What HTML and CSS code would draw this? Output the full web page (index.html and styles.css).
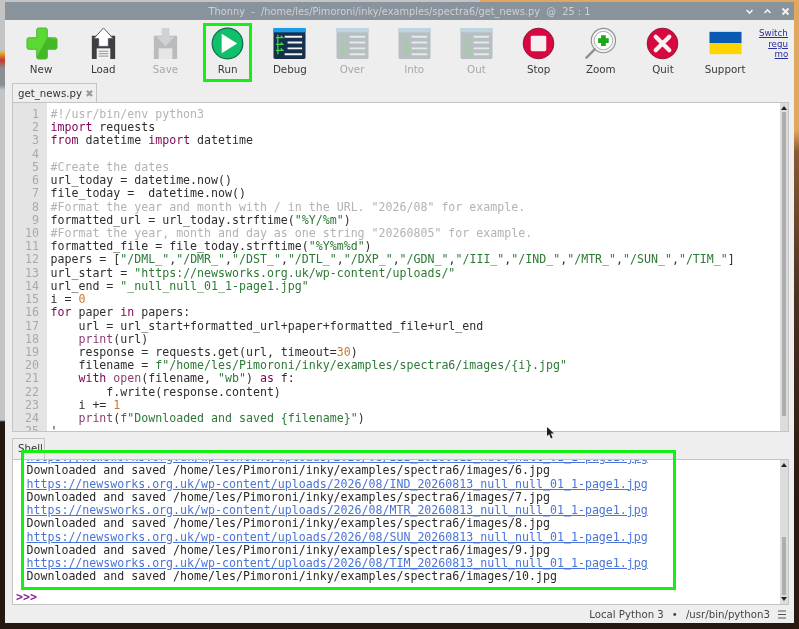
FILE: index.html
```html
<!DOCTYPE html>
<html lang="en">
<head>
    <meta charset="UTF-8">
    <title>Thonny - get_news.py</title>
    <link rel="stylesheet" href="styles.css">
</head>
<body>
<div class="window">
    <div class="titlebar">
        <span class="title">Thonny  -  /home/les/Pimoroni/inky/examples/spectra6/get_news.py  @  25 : 1</span>
        <div class="win-buttons">
            <svg width="9" height="9" viewBox="0 0 9 9"><path d="M1.5 3 L4.5 6 L7.5 3" fill="none" stroke="#f2f3f4" stroke-width="1.6"/></svg>
            <svg width="9" height="9" viewBox="0 0 9 9"><path d="M1.5 6 L4.5 3 L7.5 6" fill="none" stroke="#f2f3f4" stroke-width="1.6"/></svg>
            <svg width="9" height="9" viewBox="0 0 9 9"><path d="M1.5 1.5 L7.5 7.5 M7.5 1.5 L1.5 7.5" fill="none" stroke="#f2f3f4" stroke-width="2"/></svg>
        </div>
    </div>

    <div class="toolbar">
        <div class="tool">
            <svg class="icon" viewBox="0 0 34 34">
                <path d="M12 3 Q12 1 14 1 H21 Q23 1 23 3 V11 H31 Q33 11 33 13 V21 Q33 23 31 23 H23 V31 Q23 33 21 33 H14 Q12 33 12 31 V23 H4 Q2 23 2 21 V13 Q2 11 4 11 H12 Z" fill="#5ad935" stroke="#3fa526" stroke-width=".8"/>
                <path d="M33 13 V21 Q33 23 31 23 H23 V31 Q23 33 21 33 H14 Q12 33 12 31 L23 11 Z" fill="#45b82a"/>
            </svg>
            <span>New</span>
        </div>
        <div class="tool">
            <svg class="icon" viewBox="0 0 34 34">
                <path d="M5 9 H29 V33 H5 Z" fill="#3d3f42"/>
                <rect x="10" y="22" width="14" height="11" fill="#f2f2f2"/>
                <path d="M12 25 H22 M12 27.5 H22 M12 30 H22" stroke="#8b8d90"/>
                <path d="M17 1 L27 12 H22 V20 H12 V12 H7 Z" fill="#fff" stroke="#55585c"/>
            </svg>
            <span>Load</span>
        </div>
        <div class="tool off">
            <svg class="icon" viewBox="0 0 34 34">
                <path d="M5 9 H29 V33 H5 Z" fill="#b9bcbf"/>
                <rect x="10" y="22" width="14" height="11" fill="#e6e6e6"/>
                <path d="M17 20 L26 10 H21 V1 H13 V10 H8 Z" fill="#cfd1d3"/>
            </svg>
            <span>Save</span>
        </div>
        <div class="tool">
            <svg class="icon" viewBox="0 0 34 34">
                <circle cx="17" cy="17" r="15.8" fill="#0fbf6a" stroke="#0b6b48" stroke-width="1.2"/>
                <path d="M11 7 L27 17 L11 27 Z" fill="#fff"/>
            </svg>
            <span>Run</span>
            <div class="run-mark"></div>
        </div>
        <div class="tool">
            <svg class="icon" viewBox="0 0 34 34">
                <rect x="0.5" y="1" width="33" height="32" rx="1.5" fill="#16304c"/>
                <rect x="0.5" y="1" width="33" height="4.5" fill="#1e9be6"/>
                <path d="M12 9 H30 V11 H12 Z M15 15 H30 V17 H15 Z M15 21 H30 V23 H15 Z M12 27 H30 V29 H12 Z" fill="#f2f4f6"/>
                <path d="M5 8 V28 M3 11 H10 L8 9 M3 18 H10 L8 16 M3 24 H10 L8 22" fill="none" stroke="#3fdc3f" stroke-width="1.3"/>
            </svg>
            <span>Debug</span>
        </div>
        <div class="tool off">
            <svg class="icon" viewBox="0 0 34 34">
                <rect x="0.5" y="1" width="33" height="32" rx="1.5" fill="#b7bfc2"/>
                <rect x="0.5" y="1" width="33" height="4.5" fill="#bcd5df"/>
                <path d="M14 9 H30 V11 H14 Z M14 15 H30 V17 H14 Z M14 21 H30 V23 H14 Z M14 27 H30 V29 H14 Z" fill="#e6e9ea"/>
                <path d="M7 8 V27 M3.5 23 L7 28 L10.5 23" fill="none" stroke="#a2cda2" stroke-width="1.6"/>
            </svg>
            <span>Over</span>
        </div>
        <div class="tool off">
            <svg class="icon" viewBox="0 0 34 34">
                <rect x="0.5" y="1" width="33" height="32" rx="1.5" fill="#b7bfc2"/>
                <rect x="0.5" y="1" width="33" height="4.5" fill="#bcd5df"/>
                <path d="M14 9 H30 V11 H14 Z M14 15 H30 V17 H14 Z M14 21 H30 V23 H14 Z M14 27 H30 V29 H14 Z" fill="#e6e9ea"/>
                <path d="M4 9 L9 16 V26 M5 22 L9 27 L13 22" fill="none" stroke="#a2cda2" stroke-width="1.6"/>
            </svg>
            <span>Into</span>
        </div>
        <div class="tool off">
            <svg class="icon" viewBox="0 0 34 34">
                <rect x="0.5" y="1" width="33" height="32" rx="1.5" fill="#b7bfc2"/>
                <rect x="0.5" y="1" width="33" height="4.5" fill="#bcd5df"/>
                <path d="M14 9 H30 V11 H14 Z M14 15 H30 V17 H14 Z M14 21 H30 V23 H14 Z M14 27 H30 V29 H14 Z" fill="#e6e9ea"/>
                <path d="M13 13 H7 V27 H12 M9 23 L13 27 L9 31" fill="none" stroke="#a2cda2" stroke-width="1.6"/>
            </svg>
            <span>Out</span>
        </div>
        <div class="tool">
            <svg class="icon" viewBox="0 0 34 34">
                <circle cx="17" cy="17" r="15.8" fill="#d7073f" stroke="#8f1437" stroke-width="1"/>
                <rect x="9" y="9" width="16" height="16" rx="1.5" fill="#f6eef0"/>
            </svg>
            <span>Stop</span>
        </div>
        <div class="tool">
            <svg class="icon" viewBox="0 0 34 34">
                <circle cx="20" cy="14" r="12.5" fill="#f4f4f4" stroke="#8e9092" stroke-width="1.2"/>
                <circle cx="20" cy="14" r="9.5" fill="#fff" stroke="#a5a7a9" stroke-width="1"/>
                <path d="M17.6 8.5 H22.4 V11.6 H25.5 V16.4 H22.4 V19.5 H17.6 V16.4 H14.5 V11.6 H17.6 Z" fill="#1aa81a"/>
                <path d="M11 23 L2.5 31.5" stroke="#8e9092" stroke-width="2.6" stroke-linecap="round"/>
            </svg>
            <span>Zoom</span>
        </div>
        <div class="tool">
            <svg class="icon" viewBox="0 0 34 34">
                <circle cx="17" cy="17" r="15.8" fill="#d7073f" stroke="#8f1437" stroke-width="1"/>
                <path d="M10 10 L24 24 M24 10 L10 24" stroke="#f8f2f3" stroke-width="4.4" stroke-linecap="round"/>
            </svg>
            <span>Quit</span>
        </div>
        <div class="tool">
            <svg class="icon" viewBox="0 0 34 34">
                <rect x="0.5" y="5" width="33" height="11.5" fill="#0a5ab4"/>
                <rect x="0.5" y="16.5" width="33" height="11.5" fill="#fdd300"/>
            </svg>
            <span>Support</span>
        </div>
        <div class="switch-clip">
            <a class="switch-link">Switch to<br>regular<br>mode</a>
        </div>
    </div>

    <div class="tabs">
        <div class="tab">get_news.py <span class="tab-close">✖</span></div>
    </div>
    <div class="editor">
        <pre class="gutter">1
2
3
4
5
6
7
8
9
10
11
12
13
14
15
16
17
18
19
20
21
22
23
24
25</pre>
        <pre class="code"><i>#!/usr/bin/env python3</i>
<b>import</b> requests
<b>from</b> datetime <b>import</b> datetime

<i>#Create the dates</i>
url_today = datetime.now()
file_today =  datetime.now()
<i>#Format the year and month with / in the URL. "2026/08" for example.</i>
formatted_url = url_today.strftime(<s>"%Y/%m"</s>)
<i>#Format the year, month and day as one string "20260805" for example.</i>
formatted_file = file_today.strftime(<s>"%Y%m%d"</s>)
papers = [<s>"/DML_"</s>,<s>"/DMR_"</s>,<s>"/DST_"</s>,<s>"/DTL_"</s>,<s>"/DXP_"</s>,<s>"/GDN_"</s>,<s>"/III_"</s>,<s>"/IND_"</s>,<s>"/MTR_"</s>,<s>"/SUN_"</s>,<s>"/TIM_"</s>]
url_start = <s>"https://newsworks.org.uk/wp-content/uploads/"</s>
url_end = <s>"_null_null_01_1-page1.jpg"</s>
i = <u>0</u>
<b>for</b> paper <b>in</b> papers:
    url = url_start+formatted_url+paper+formatted_file+url_end
    <em>print</em>(url)
    response = requests.get(url, timeout=<u>30</u>)
    filename = <s>f"/home/les/Pimoroni/inky/examples/spectra6/images/{i}.jpg"</s>
    <b>with</b> <em>open</em>(filename, <s>"wb"</s>) <b>as</b> f:
        f.write(response.content)
    i += <u>1</u>
    <em>print</em>(<s>f"Downloaded and saved {filename}"</s>)
'</pre>
        <div class="scrollbar">
            <span class="arrow-up"></span>
            <div class="track"><div class="thumb thumb-editor"></div></div>
            <span class="arrow-down"></span>
        </div>
    </div>

    <div class="tabs shell-tabs">
        <div class="tab tab-shell">Shell</div>
    </div>
    <div class="shell">
        <div class="shell-main">
            <pre class="shell-out"><a>https://newsworks.org.uk/wp-content/uploads/2026/08/III_20260813_null_null_01_1-page1.jpg</a>
Downloaded and saved /home/les/Pimoroni/inky/examples/spectra6/images/6.jpg
<a>https://newsworks.org.uk/wp-content/uploads/2026/08/IND_20260813_null_null_01_1-page1.jpg</a>
Downloaded and saved /home/les/Pimoroni/inky/examples/spectra6/images/7.jpg
<a>https://newsworks.org.uk/wp-content/uploads/2026/08/MTR_20260813_null_null_01_1-page1.jpg</a>
Downloaded and saved /home/les/Pimoroni/inky/examples/spectra6/images/8.jpg
<a>https://newsworks.org.uk/wp-content/uploads/2026/08/SUN_20260813_null_null_01_1-page1.jpg</a>
Downloaded and saved /home/les/Pimoroni/inky/examples/spectra6/images/9.jpg
<a>https://newsworks.org.uk/wp-content/uploads/2026/08/TIM_20260813_null_null_01_1-page1.jpg</a>
Downloaded and saved /home/les/Pimoroni/inky/examples/spectra6/images/10.jpg</pre>
            <pre class="prompt">&gt;&gt;&gt;</pre>
        </div>
        <div class="scrollbar">
            <span class="arrow-up"></span>
            <div class="track"><div class="thumb thumb-shell"></div></div>
            <span class="arrow-down"></span>
        </div>
    </div>

    <div class="statusbar">
        <span>Local Python 3</span>
        <span>•</span>
        <span>/usr/bin/python3</span>
        <svg width="9" height="9" viewBox="0 0 9 9"><path d="M0 1 H8 M0 4.5 H8 M0 8 H8" stroke="#555" stroke-width="1.2"/></svg>
    </div>

    <div class="shell-mark"></div>
    <svg class="cursor" width="10" height="13" viewBox="0 0 10 13"><path d="M1 0 L1 9 L3.2 7.2 L5 11.5 L6.6 10.6 L4.8 6.6 L8 6.4 Z" fill="#1c1e22"/></svg>
</div>
</body>
</html>
```

FILE: styles.css
```css
/* desktop behind the window */
html, body {
    margin: 0;
    height: 100%;
}
body {
    width: 799px;
    height: 629px;
    overflow: hidden;
    box-sizing: border-box;
    padding: 2px 5px 6px 5px;
    background:
        linear-gradient(to bottom, #c4c4c4 0, #c4c4c4 50px, #e0b030 53px, #c8382c 60px, #8a8f96 68px, #8a8f96 85px, #c2c4c6 90px, #c2c4c6 420px, #241810 422px) left top / 5px 100% no-repeat,
        linear-gradient(to bottom, #dfa860 0, #dfa860 130px, #8a5a30 152px, #4a3020 300px, #2a1a10 500px) right top / 5px 100% no-repeat,
        linear-gradient(to right, #c4c4c4 0, #c4c4c4 480px, #dfa860 480px) left top / 100% 2px no-repeat,
        #241810;
    font-family: "DejaVu Sans", sans-serif;
    color: #333;
}

.window {
    position: relative;
    height: 621px;
    display: flex;
    flex-direction: column;
    background-color: #eeeeee;
    filter: blur(0.35px);
}

/* title bar */
.titlebar {
    height: 18px;
    flex: none;
    position: relative;
    display: flex;
    align-items: center;
    justify-content: center;
    background-color: #89939c;
}
.title {
    color: #cdd1d5;
    font-size: 9.8px;
    white-space: pre;
}
.win-buttons {
    position: absolute;
    right: 4px;
    top: 5px;
    display: flex;
    gap: 9px;
}

/* toolbar */
.toolbar {
    height: 64px;
    flex: none;
    display: flex;
    padding-left: 5px;
}
.tool {
    position: relative;
    width: 62.2px;
    flex: none;
    display: flex;
    flex-direction: column;
    align-items: center;
    padding-top: 7px;
    box-sizing: border-box;
    font-size: 10.3px;
    color: #3a3a3a;
}
.icon {
    width: 33px;
    height: 33px;
    margin-bottom: 3px;
}
.tool.off {
    color: #a8a8a8;
}
.run-mark {
    position: absolute;
    top: 3px;
    bottom: 2px;
    left: 6px;
    right: 7px;
    border: 3px solid #14f014;
}
.switch-clip {
    margin-left: 2px;
    margin-top: 8px;
    width: 30px;
    height: 36px;
    overflow: hidden;
}
.switch-link {
    display: block;
    width: 41px;
    font-size: 8.7px;
    line-height: 10.6px;
    text-align: right;
    color: #2b2f9e;
    text-decoration: underline;
}

/* tabs */
.tabs {
    height: 18px;
    flex: none;
    padding-left: 7px;
    display: flex;
    align-items: flex-end;
}
.tab {
    height: 19px;
    width: 85px;
    box-sizing: border-box;
    border: 1px solid #c4c4c4;
    border-bottom: none;
    background-color: #efefef;
    font-size: 10.2px;
    line-height: 19px;
    padding-left: 5px;
    color: #333;
    white-space: nowrap;
}
.tab-close {
    color: #9b9b9b;
    font-size: 10px;
}
.tab-shell {
    height: 21px;
    width: 33px;
    line-height: 19px;
}
.shell-tabs {
    height: 27px;
}

/* editor */
.editor, .shell {
    display: flex;
    margin: 0 5px 0 7px;
    border: 1px solid #c4c4c4;
    background-color: #fff;
    overflow: hidden;
}
.editor {
    height: 330px;
    flex: none;
    box-sizing: border-box;
}
pre {
    margin: 0;
    font-family: "DejaVu Sans Mono", monospace;
    font-size: 11.6px;
    line-height: 13.22px;
}
.gutter {
    width: 34px;
    flex: none;
    box-sizing: border-box;
    padding: 5px 8px 0 0;
    text-align: right;
    color: #a9a9a9;
    background-color: #e4e4e4;
}
.code {
    flex: 1;
    padding: 5px 0 0 3.5px;
    color: #2e2e2e;
}
.code b {
    font-weight: normal;
    color: #7f0055;
}
.code i {
    font-style: normal;
    color: #b3b3b3;
}
.code s {
    text-decoration: none;
    color: #2c7a36;
}
.code u {
    text-decoration: none;
    color: #c8762c;
}
.code em {
    font-style: normal;
    color: #8c3f72;
}

/* scrollbars */
.scrollbar {
    width: 8px;
    flex: none;
    display: flex;
    flex-direction: column;
    align-items: center;
    padding: 3px 0;
    box-sizing: border-box;
    background-color: #dcdcdc;
}
.arrow-up, .arrow-down {
    flex: none;
    width: 0;
    height: 0;
    border-left: 3px solid transparent;
    border-right: 3px solid transparent;
}
.arrow-up {
    border-bottom: 4px solid #222;
}
.arrow-down {
    border-top: 4px solid #222;
}
.track {
    flex: 1;
    width: 100%;
    display: flex;
    flex-direction: column;
    justify-content: flex-end;
    padding: 2px 0;
    box-sizing: border-box;
}
.thumb {
    width: 4px;
    margin: 0 auto;
    background-color: #aeaeae;
}
.thumb-editor {
    height: 304px;
    margin-bottom: 14px;
}
.thumb-shell {
    height: 58px;
}

/* shell */
.shell {
    height: 146px;
    flex: none;
    box-sizing: border-box;
}
.shell-main {
    flex: 1;
    min-width: 0;
    display: flex;
    flex-direction: column;
    justify-content: flex-end;
    overflow: hidden;
    padding: 0 0 0 3px;
}
.shell-out {
    color: #2a2a2a;
    line-height: 13.25px;
    padding-left: 10.5px;
}
.shell-out a {
    color: #4a74d8;
    text-decoration: underline;
}
.prompt {
    color: #8a1f9a;
    font-weight: bold;
    margin-top: 6.5px;
    height: 14px;
    line-height: 14px;
}

/* status bar */
.statusbar {
    flex: 1;
    display: flex;
    justify-content: flex-end;
    align-items: center;
    gap: 8px;
    padding-right: 7px;
    font-size: 10.2px;
    color: #444;
}

/* marks drawn over the capture */
.shell-mark {
    position: absolute;
    left: 16px;
    top: 448px;
    width: 655px;
    height: 140px;
    box-sizing: border-box;
    border: 3px solid #14f014;
}
.cursor {
    position: absolute;
    left: 541px;
    top: 425px;
}
```
